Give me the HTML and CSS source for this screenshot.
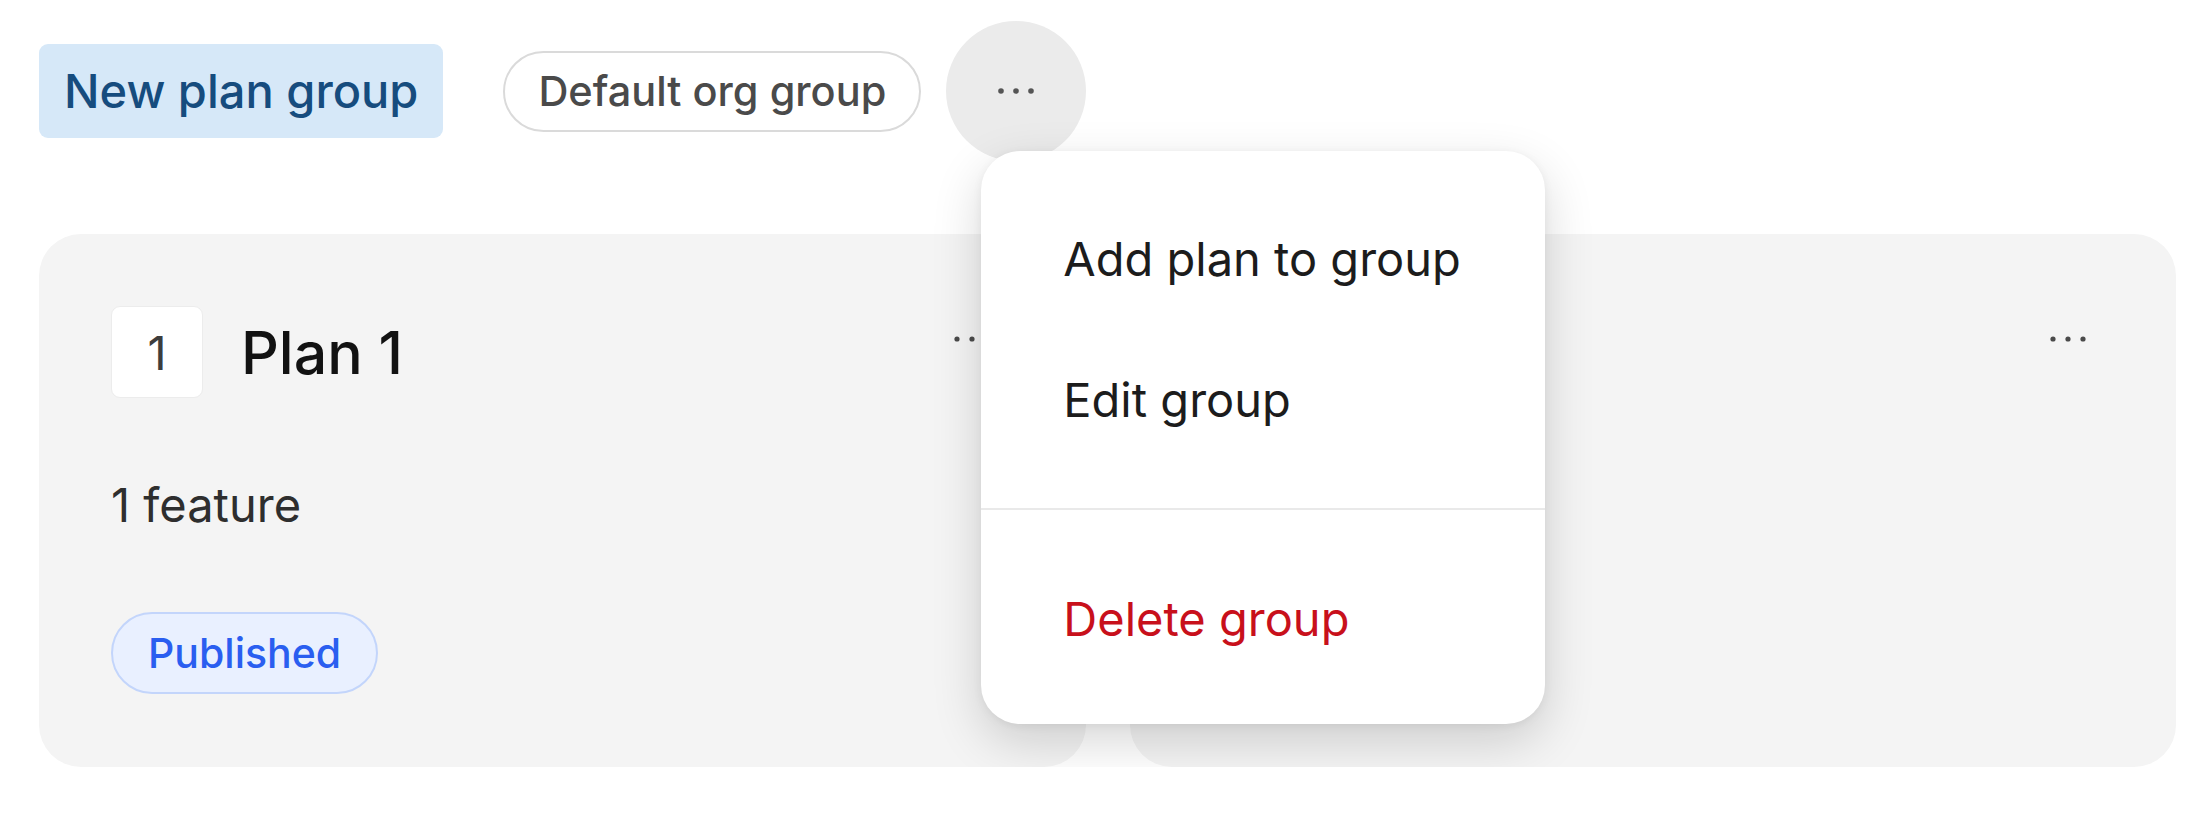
FILE: index.html
```html
<!DOCTYPE html>
<html lang="en">
<head>
<meta charset="utf-8">
<title>Plan groups</title>
<link rel="stylesheet" href="styles.css">
</head>
<body>
<div class="page">
  <div class="toolbar">
    <button class="btn-new">New plan group</button>
    <span class="chip-outline">Default org group</span>
    <div class="more-wrap">
      <button class="more-circle" aria-label="More">
        <svg width="40" height="8" viewBox="0 0 40 8"><circle cx="5" cy="4" r="2.8"/><circle cx="20" cy="4" r="2.8"/><circle cx="35" cy="4" r="2.8"/></svg>
      </button>
      <div class="menu">
        <div class="menu-item">Add plan to group</div>
        <div class="menu-item">Edit group</div>
        <div class="menu-sep"></div>
        <div class="menu-item danger">Delete group</div>
      </div>
    </div>
  </div>

  <div class="cards">
    <div class="card">
      <div class="card-header">
        <span class="num">1</span>
        <span class="plan-title">Plan 1</span>
        <button class="card-more" aria-label="Plan options">
          <svg width="40" height="8" viewBox="0 0 40 8"><circle cx="5" cy="4" r="2.6"/><circle cx="20" cy="4" r="2.6"/><circle cx="35" cy="4" r="2.6"/></svg>
        </button>
      </div>
      <div class="features">1 feature</div>
      <div><span class="badge">Published</span></div>
    </div>
    <div class="card">
      <div class="card-header">
        <button class="card-more" aria-label="Plan options">
          <svg width="40" height="8" viewBox="0 0 40 8"><circle cx="5" cy="4" r="2.6"/><circle cx="20" cy="4" r="2.6"/><circle cx="35" cy="4" r="2.6"/></svg>
        </button>
      </div>
    </div>
  </div>
</div>
</body>
</html>
```

FILE: styles.css
```css
* { box-sizing: border-box; }

html, body {
  margin: 0;
  background: #ffffff;
}

body {
  font-family: Inter, "Noto Sans", "Liberation Sans", sans-serif;
  color: #1a1a1a;
}

.page {
  padding: 21px 24px 0 39px;
}

.toolbar {
  display: flex;
  align-items: center;
  height: 140px;
}

button {
  font-family: inherit;
  border: none;
  cursor: pointer;
}

.btn-new {
  background: #d6e8f8;
  color: #164c7e;
  font-size: 47px;
  font-weight: 500;
  line-height: 72px;
  padding: 11px 25px;
  border-radius: 9px;
  margin-right: 60px;
}

.chip-outline {
  display: inline-flex;
  align-items: center;
  height: 81px;
  padding: 0 33px;
  border: 2px solid #dadada;
  border-radius: 999px;
  font-size: 41.5px;
  font-weight: 500;
  color: #4a4a4a;
  background: #ffffff;
  margin-right: 25px;
}

.more-wrap {
  position: relative;
  width: 140px;
  height: 140px;
}

.more-circle {
  width: 140px;
  height: 140px;
  border-radius: 50%;
  background: #ebebeb;
  display: flex;
  align-items: center;
  justify-content: center;
  padding: 0;
}

.more-circle svg { fill: #555555; }

.menu {
  position: absolute;
  left: 35px;
  top: 130px;
  width: 564px;
  background: #ffffff;
  border-radius: 39px;
  padding: 37px 0 35px;
  box-shadow: 0 18px 50px rgba(0, 0, 0, 0.16), 0 2px 10px rgba(0, 0, 0, 0.06);
  z-index: 10;
}

.menu-item {
  padding: 34px 82px;
  font-size: 47px;
  line-height: 73px;
  color: #1c1c1c;
  white-space: nowrap;
}

.menu-item.danger {
  color: #c8101b;
}

.menu-sep {
  height: 2px;
  background: #e9e9e9;
  margin: 38px 0;
}

.cards {
  display: grid;
  grid-template-columns: 1fr 1fr;
  gap: 44px;
  margin-top: 73px;
}

.card {
  background: #f4f4f4;
  border-radius: 42px;
  padding: 72px;
  height: 533px;
  display: flex;
  flex-direction: column;
  gap: 72px;
}

.card-header {
  display: flex;
  align-items: center;
  gap: 38px;
  height: 92px;
}

.num {
  width: 92px;
  height: 92px;
  background: #ffffff;
  border: 1px solid #ececec;
  border-radius: 9px;
  display: flex;
  align-items: center;
  justify-content: center;
  font-size: 47px;
  color: #3d3d3d;
}

.plan-title {
  font-size: 59px;
  font-weight: 500;
  color: #121212;
}

.card-more {
  margin-left: auto;
  margin-right: 6px;
  align-self: flex-start;
  width: 72px;
  height: 66px;
  background: transparent;
  display: flex;
  align-items: center;
  justify-content: center;
  padding: 0;
}

.card:last-child .card-more {
  margin-right: 0;
}

.card-more svg { fill: #4a4a4a; }

.features {
  font-size: 47px;
  line-height: 70px;
  color: #2e2e2e;
}

.badge {
  display: inline-flex;
  align-items: center;
  height: 82px;
  padding: 0 35px;
  border: 2px solid #c3d5fb;
  border-radius: 999px;
  background: #e9f0ff;
  color: #2a5ef0;
  font-size: 41px;
  font-weight: 500;
}
```
